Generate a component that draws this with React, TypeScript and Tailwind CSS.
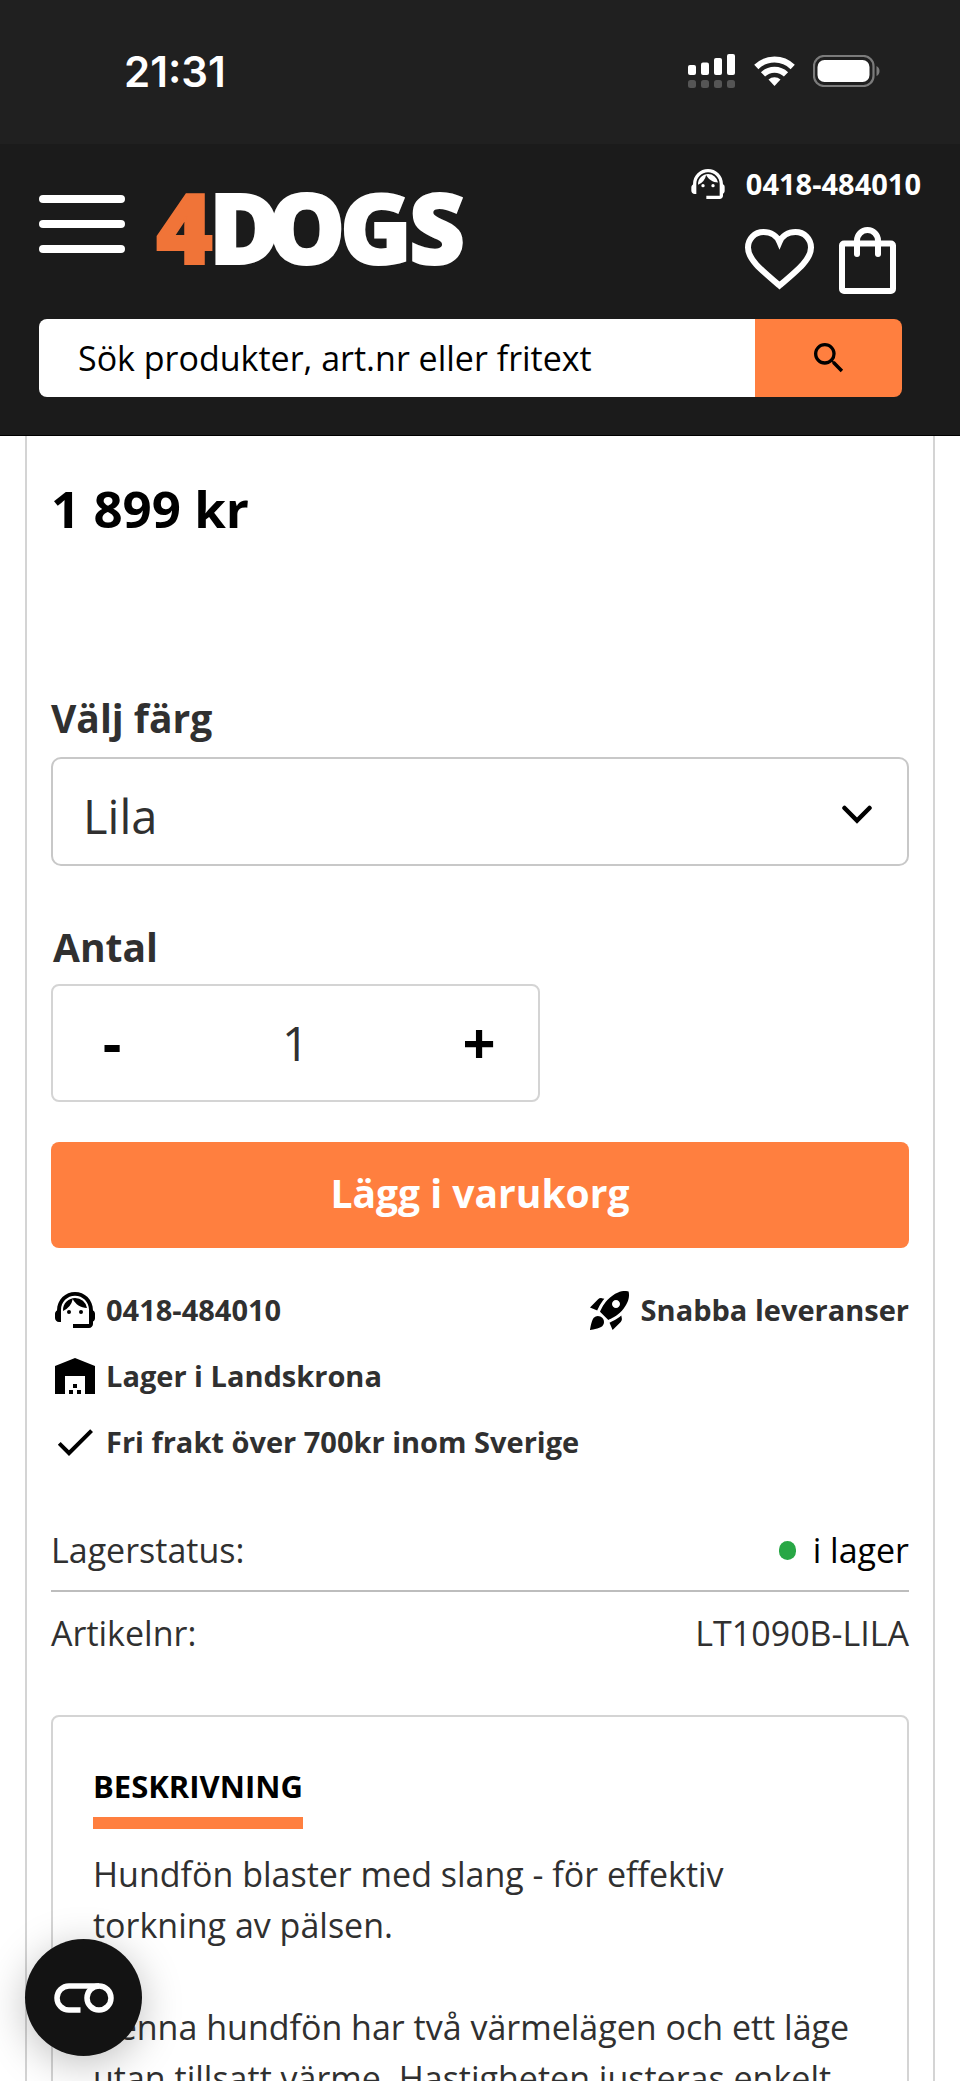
import { useState } from "react";
import type { ReactNode } from "react";
import { MdCheck, MdRocketLaunch, MdSearch, MdSupportAgent, MdWarehouse } from "react-icons/md";

const COLORS = ["Lila", "Rosa", "Svart"];

const PARAGRAPHS = [
  "Hundfön blaster med slang - för effektiv torkning av pälsen.",
  "Denna hundfön har två värmelägen och ett läge utan tillsatt värme. Hastigheten justeras enkelt",
];

function StatusBar() {
  return (
    <div className="flex h-36 shrink-0 items-center justify-between bg-[#202020] pr-20 pb-0.5 pl-[124px] text-white">
      <span className="font-[Inter] text-[42px] font-semibold">21:31</span>
      <div className="flex items-center gap-[18px]">
        {/* Dual SIM signal */}
        <svg className="h-[34px] w-12" viewBox="0 0 48 34" fill="currentColor">
          <rect x="0" y="11" width="8" height="10" rx="2" />
          <rect x="13" y="8.500" width="8" height="12.500" rx="2" />
          <rect x="26" y="4" width="8" height="17" rx="2" />
          <rect x="39" y="0" width="8" height="21" rx="2" />
          <g fill="#555">
            <rect x="0" y="26" width="8" height="8" rx="2.500" />
            <rect x="13" y="26" width="8" height="8" rx="2.500" />
            <rect x="26" y="26" width="8" height="8" rx="2.500" />
            <rect x="39" y="26" width="8" height="8" rx="2.500" />
          </g>
        </svg>
        <svg className="h-[31px] w-[41px]" viewBox="0 0 41 31" fill="none" stroke="currentColor" strokeWidth="6">
          <path d="M2.300 11 A26 26 0 0 1 38.700 11" />
          <path d="M9 18.300 A16.500 16.500 0 0 1 32 18.300" />
          <path d="M14.500 23.500 A9 9 0 0 1 26.500 23.500 L20.500 30 Z" fill="currentColor" stroke="none" />
        </svg>
        <svg className="h-8 w-[67px]" viewBox="0 0 67 32">
          <rect x="1" y="1" width="59.500" height="30" rx="10" fill="none" stroke="#7b7b7b" strokeWidth="2.200" />
          <rect x="4.500" y="5" width="52" height="22" rx="7" fill="#fff" />
          <path d="M63.500 11 Q66.500 12.500 66.500 16 Q66.500 19.500 63.500 21 Z" fill="#7b7b7b" />
        </svg>
      </div>
    </div>
  );
}

function Logo() {
  return (
    <a href="#" aria-label="4DOGS">
      <svg
        className="h-[74px] w-[307px] overflow-visible"
        viewBox="0 0 307 74"
        fontFamily="Open Sans"
        fontSize="97"
        fontWeight="800"
        strokeWidth="2"
      >
        <text x="0" y="70" fill="#f07438" stroke="#f07438">4</text>
        <text x="53 112 184 253" y="70" fill="#fff" stroke="#fff">DOGS</text>
      </svg>
    </a>
  );
}

function Header() {
  return (
    <header className="shrink-0 border-b border-black bg-[#1b1b1b] pt-6 pb-[38px] text-white">
      <div className="flex items-center justify-between px-[39px]">
        <div className="flex items-center gap-[31px]">
          <button type="button" aria-label="Meny" className="mb-3.5 flex w-[86px] flex-col gap-[17px]">
            <span className="h-2 rounded-full bg-white" />
            <span className="h-2 rounded-full bg-white" />
            <span className="h-2 rounded-full bg-white" />
          </button>
          <Logo />
        </div>
        <div className="flex flex-col items-end gap-[27px]">
          <a href="tel:0418484010" className="flex h-8 items-center gap-[18px] text-[29px] font-bold">
            <MdSupportAgent className="size-10" />
            0418-484010
          </a>
          <div className="mr-[25px] flex gap-[25px]">
            <a href="#" aria-label="Favoriter">
              <svg className="h-[67px] w-[69px]" viewBox="0 0 69 67" fill="none" stroke="currentColor" strokeWidth="6">
                <path d="M34.500 58.500 C15 42 3 32 3 20.500 C3 12 9.500 5 18.500 5 C26 5 32 9 34.500 15 C37 9 43 5 50.500 5 C59.500 5 66 12 66 20.500 C66 32 54 42 34.500 58.500 Z" />
              </svg>
            </a>
            <a href="#" aria-label="Varukorg">
              <svg className="h-[67px] w-[57px]" viewBox="0 0 57 67" fill="none" stroke="currentColor" strokeWidth="6">
                <rect x="3" y="16.500" width="51" height="47.500" rx="2" />
                <path d="M18 27 V13.500 A10.500 10.500 0 0 1 39 13.500 V27" strokeLinecap="round" />
              </svg>
            </a>
          </div>
        </div>
      </div>
      <form className="mt-[25px] mr-[58px] ml-[39px] flex h-[78px] overflow-hidden rounded-lg" onSubmit={(e) => e.preventDefault()}>
        <input
          type="search"
          aria-label="Sök produkter"
          placeholder="Sök produkter, art.nr eller fritext"
          className="min-w-0 flex-1 bg-white px-[39px] text-[34px] text-black outline-none placeholder:text-black"
        />
        <button type="submit" aria-label="Sök" className="flex w-[147px] items-center justify-center bg-[#ff7f3f] text-black">
          <MdSearch className="size-10" />
        </button>
      </form>
    </header>
  );
}

function Usp({ icon, children }: { icon: ReactNode; children: ReactNode }) {
  return (
    <li className="flex h-12 items-center gap-[7px]">
      <span className="text-5xl text-black">{icon}</span>
      {children}
    </li>
  );
}

function CookieButton() {
  return (
    <button
      type="button"
      aria-label="Cookieinställningar"
      className="fixed bottom-[25px] left-[25px] flex size-[117px] items-center justify-center rounded-full bg-[#131313] text-white shadow-[0_8px_40px_rgba(0,0,0,0.25)]"
    >
      {/* Toggle mark: open pill on the left, ring on the right */}
      <svg className="h-[30px] w-[60px]" viewBox="0 0 60 30" fill="none" stroke="currentColor" strokeWidth="5.500">
        <path d="M26.500 27 H15 A12 12 0 0 1 15 3 H45" />
        <circle cx="45" cy="15" r="12" />
      </svg>
    </button>
  );
}

export default function App() {
  const [color, setColor] = useState("Lila");
  const [quantity, setQuantity] = useState(1);

  return (
    <div className="flex h-screen flex-col bg-white font-['Open_Sans',sans-serif] text-[#303030]">
      <StatusBar />
      <Header />

      <main className="flex-1 overflow-y-auto [scrollbar-width:none]">
        <div className="mx-[25px] border-x-2 border-[#d4d4d4] px-6 pt-[42px]">
          <p className="text-[51px] leading-[60px] font-bold text-black">1 899 kr</p>

          <label htmlFor="color" className="mt-[156px] block text-[39px] leading-[48px] font-bold">
            Välj färg
          </label>
          <div className="relative mt-[15px]">
            <select
              id="color"
              value={color}
              onChange={(e) => setColor(e.target.value)}
              className="h-[109px] w-full appearance-none rounded-[10px] border-2 border-[#c8c8c8] bg-white px-[30px] pt-2.5 text-[47px]"
            >
              {COLORS.map((c) => (
                <option key={c}>{c}</option>
              ))}
            </select>
            <svg
              className="pointer-events-none absolute top-12 right-[37px] h-5 w-[30px] text-black"
              viewBox="0 0 30 20"
              fill="none"
              stroke="currentColor"
              strokeWidth="4.500"
              strokeLinecap="round"
            >
              <path d="M2.500 3 L15 15.500 L27.500 3" />
            </svg>
          </div>

          <label htmlFor="quantity" className="mt-[57px] block pl-0.5 text-[39px] leading-[48px] font-bold">
            Antal
          </label>
          <div className="mt-[13px] flex h-[118px] w-[489px] max-w-full items-center rounded-lg border-2 border-[#d4d4d4]">
            <button
              type="button"
              aria-label="Minska antal"
              onClick={() => setQuantity(Math.max(1, quantity - 1))}
              className="h-full w-[118px] pb-0.5 text-[58px] leading-none font-bold text-black"
            >
              -
            </button>
            <input
              id="quantity"
              type="text"
              inputMode="numeric"
              value={quantity}
              onChange={(e) => setQuantity(Number(e.target.value) || 1)}
              className="min-w-0 flex-1 text-center text-[47px] outline-none"
            />
            <button
              type="button"
              aria-label="Öka antal"
              onClick={() => setQuantity(quantity + 1)}
              className="h-full w-[118px] pb-0.5 text-[58px] leading-none font-bold text-black"
            >
              +
            </button>
          </div>

          <button type="button" className="mt-10 h-[106px] w-full rounded-lg bg-[#ff7f3f] pb-1 text-[39px] font-bold text-white">
            Lägg i varukorg
          </button>

          <ul className="mt-[38px] flex flex-wrap justify-between gap-y-[18px] text-[29px] font-bold">
            <Usp icon={<MdSupportAgent />}>
              <a href="tel:0418484010">0418-484010</a>
            </Usp>
            <Usp icon={<MdRocketLaunch />}>Snabba leveranser</Usp>
            <li className="w-full">
              <ul>
                <Usp icon={<MdWarehouse />}>Lager i Landskrona</Usp>
              </ul>
            </li>
            <Usp icon={<MdCheck />}>Fri frakt över 700kr inom Sverige</Usp>
          </ul>

          <dl className="mt-[59px] text-[34px] leading-[50px]">
            <div className="flex justify-between border-b-2 border-[#bdbdbd] pb-[15px]">
              <dt>Lagerstatus:</dt>
              <dd className="flex items-center gap-[17px] text-black">
                <span className="h-[19px] w-[17px] rounded-full bg-[#28a745]" />i lager
              </dd>
            </div>
            <div className="flex justify-between pt-4">
              <dt>Artikelnr:</dt>
              <dd>LT1090B-LILA</dd>
            </div>
          </dl>

          <section className="mt-[57px] rounded-lg border-2 border-[#d4d4d4] pt-[49px] pr-12 pb-10 pl-10">
            <h2 className="inline-block border-b-12 border-[#ff7f3f] pb-[11px] align-top text-[31px] leading-10 font-bold text-black">
              BESKRIVNING
            </h2>
            <div className="mt-5 flex flex-col gap-[51px] text-[34px] leading-[51px]">
              {PARAGRAPHS.map((text) => (
                <p key={text}>{text}</p>
              ))}
            </div>
          </section>
        </div>
      </main>

      <CookieButton />
    </div>
  );
}
